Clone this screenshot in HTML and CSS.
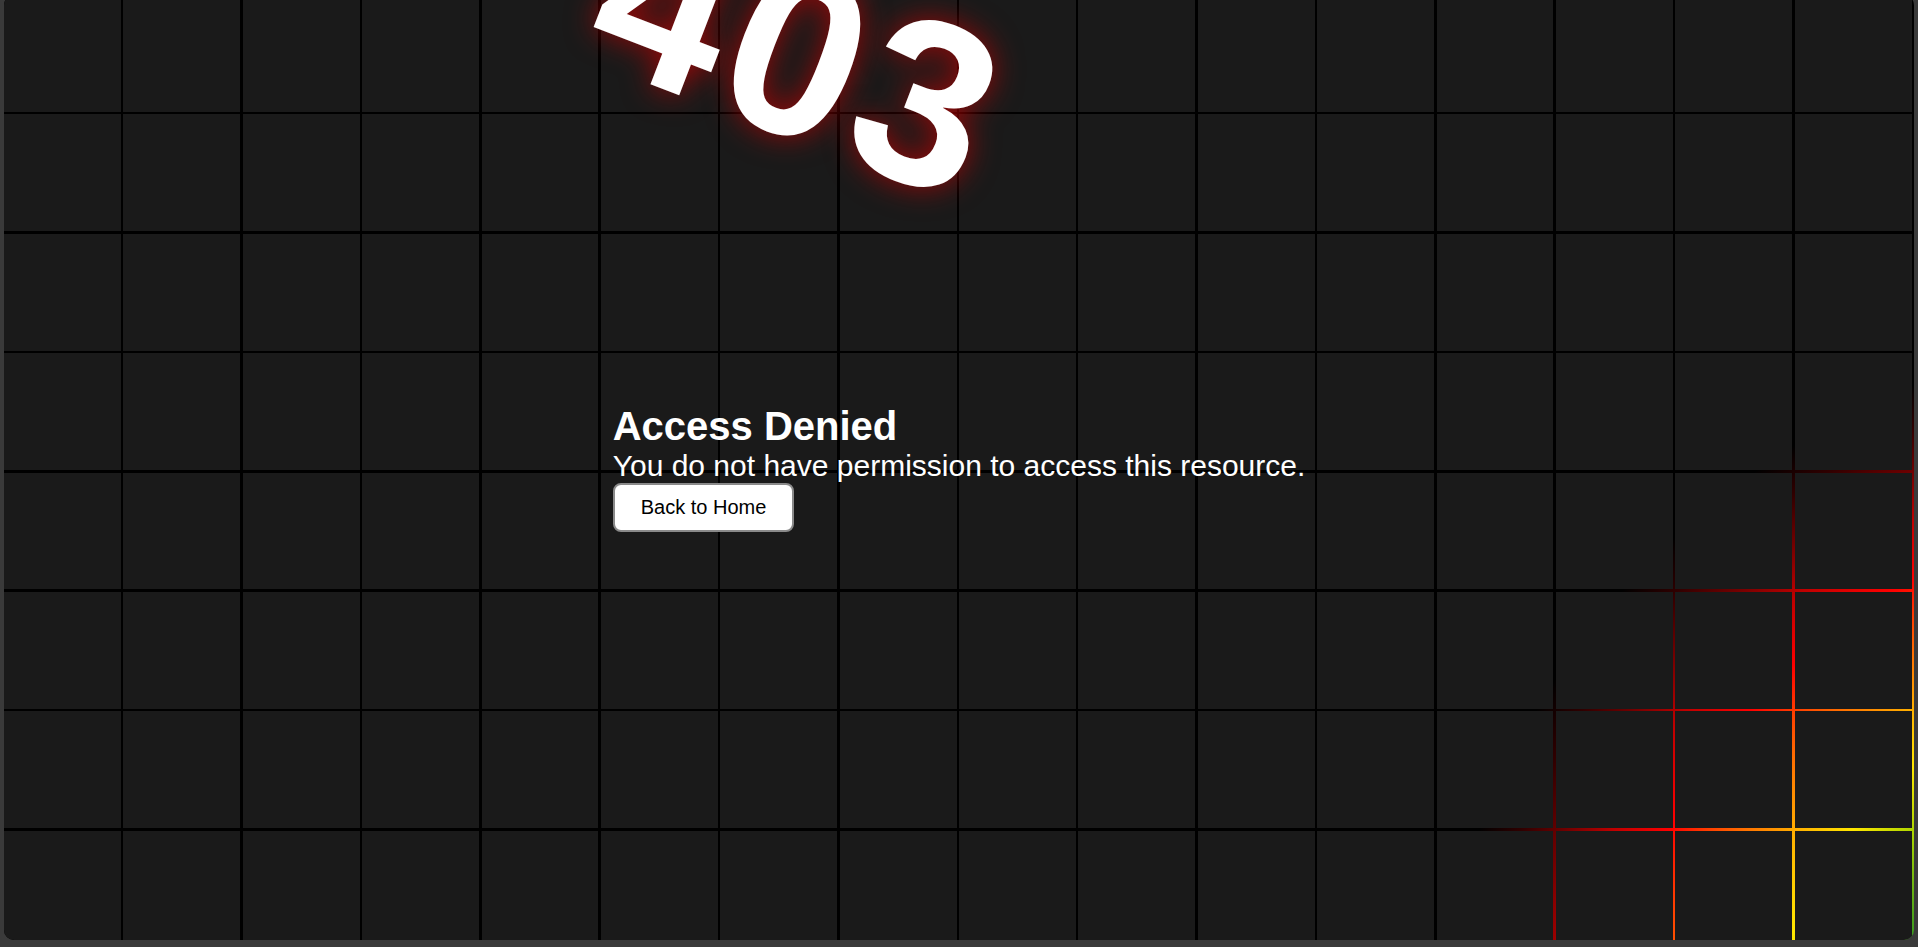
FILE: index.html
```html
<!DOCTYPE html>
<html lang="en">
<head>
<meta charset="utf-8">
<title>403 - Access Denied</title>
<link rel="stylesheet" href="styles.css">
</head>
<body>
<main class="panel">
  <div class="cells">
    <div class="cell"></div><div class="cell"></div><div class="cell"></div><div class="cell"></div><div class="cell"></div><div class="cell"></div><div class="cell"></div><div class="cell"></div>
    <div class="cell"></div><div class="cell"></div><div class="cell"></div><div class="cell"></div><div class="cell"></div><div class="cell"></div><div class="cell"></div><div class="cell"></div>
    <div class="cell"></div><div class="cell"></div><div class="cell"></div><div class="cell"></div><div class="cell"></div><div class="cell"></div><div class="cell"></div><div class="cell"></div>
    <div class="cell"></div><div class="cell"></div><div class="cell"></div><div class="cell"></div><div class="cell"></div><div class="cell"></div><div class="cell"></div><div class="cell"></div>
    <div class="cell"></div><div class="cell"></div><div class="cell"></div><div class="cell"></div><div class="cell"></div><div class="cell"></div><div class="cell"></div><div class="cell"></div>
    <div class="cell"></div><div class="cell"></div><div class="cell"></div><div class="cell"></div><div class="cell"></div><div class="cell"></div><div class="cell"></div><div class="cell"></div>
    <div class="cell"></div><div class="cell"></div><div class="cell"></div><div class="cell"></div><div class="cell"></div><div class="cell"></div><div class="cell"></div><div class="cell"></div>
    <div class="cell"></div><div class="cell"></div><div class="cell"></div><div class="cell"></div><div class="cell"></div><div class="cell"></div><div class="cell"></div><div class="cell"></div>
    <div class="cell"></div><div class="cell"></div><div class="cell"></div><div class="cell"></div><div class="cell"></div><div class="cell"></div><div class="cell"></div><div class="cell"></div>
    <div class="cell"></div><div class="cell"></div><div class="cell"></div><div class="cell"></div><div class="cell"></div><div class="cell"></div><div class="cell"></div><div class="cell"></div>
    <div class="cell"></div><div class="cell"></div><div class="cell"></div><div class="cell"></div><div class="cell"></div><div class="cell"></div><div class="cell"></div><div class="cell"></div>
    <div class="cell"></div><div class="cell"></div><div class="cell"></div><div class="cell"></div><div class="cell"></div><div class="cell"></div><div class="cell"></div><div class="cell"></div>
    <div class="cell"></div><div class="cell"></div><div class="cell"></div><div class="cell"></div><div class="cell"></div><div class="cell"></div><div class="cell"></div><div class="cell"></div>
    <div class="cell"></div><div class="cell"></div><div class="cell"></div><div class="cell"></div><div class="cell"></div><div class="cell"></div><div class="cell"></div><div class="cell"></div>
    <div class="cell"></div><div class="cell"></div><div class="cell"></div><div class="cell"></div><div class="cell"></div><div class="cell"></div><div class="cell"></div><div class="cell"></div>
    <div class="cell"></div><div class="cell"></div><div class="cell"></div><div class="cell"></div><div class="cell"></div><div class="cell"></div><div class="cell"></div><div class="cell"></div>
  </div>
  <div class="content">
    <h1 class="title">Access Denied</h1>
    <p class="message">You do not have permission to access this resource.</p>
    <button class="home-btn" type="button">Back to Home</button>
  </div>
  <div class="code">403</div>
</main>
</body>
</html>
```

FILE: styles.css
```css
html, body {
  margin: 0;
  height: 100%;
}

body {
  background: #3a3a3a;
  overflow: hidden;
  font-family: "Liberation Sans", Arial, sans-serif;
}

.panel {
  position: relative;
  display: grid;
  grid-template-rows: 945px;
  grid-template-columns: 1fr;
  height: 945px;
  margin: -5px 4px 0 4px;
  border-radius: 10px;
  overflow: hidden;
  background: radial-gradient(circle at 2196px 1105px,
    #3a9a20 330px,
    #a8d400 390px,
    #ffe600 440px,
    #ffb000 485px,
    #ff7000 530px,
    #ff3800 565px,
    #ff0000 595px,
    #c00000 645px,
    #700000 690px,
    #300000 730px,
    #000000 770px);
}

.cells {
  grid-area: 1 / 1;
  align-self: start;
  display: grid;
  grid-template-columns: repeat(16, 1fr);
  gap: 2.5px;
  padding-right: 2.5px;
}

.cell {
  aspect-ratio: 1;
  background: #1a1a1a;
}

.content {
  grid-area: 1 / 1;
  align-self: center;
  justify-self: center;
  display: flex;
  flex-direction: column;
  align-items: flex-start;
  color: #ffffff;
  z-index: 1;
}

.title {
  margin: 0;
  font-size: 40px;
  font-weight: 700;
}

.message {
  margin: 0;
  font-size: 30px;
}

.home-btn {
  font-family: "Liberation Sans", Arial, sans-serif;
  font-size: 20px;
  color: #000000;
  background: #ffffff;
  border: 2px solid #8a8a8a;
  border-radius: 8px;
  padding: 11px 26px;
}

.code {
  position: absolute;
  left: 590px;
  top: -58px;
  width: 413px;
  font-size: 235px;
  font-weight: 700;
  line-height: 1;
  letter-spacing: 7px;
  white-space: nowrap;
  color: #ffffff;
  transform: rotate(21deg);
  text-shadow: 0 0 30px rgba(200, 0, 0, 0.75);
  z-index: 2;
}
```
